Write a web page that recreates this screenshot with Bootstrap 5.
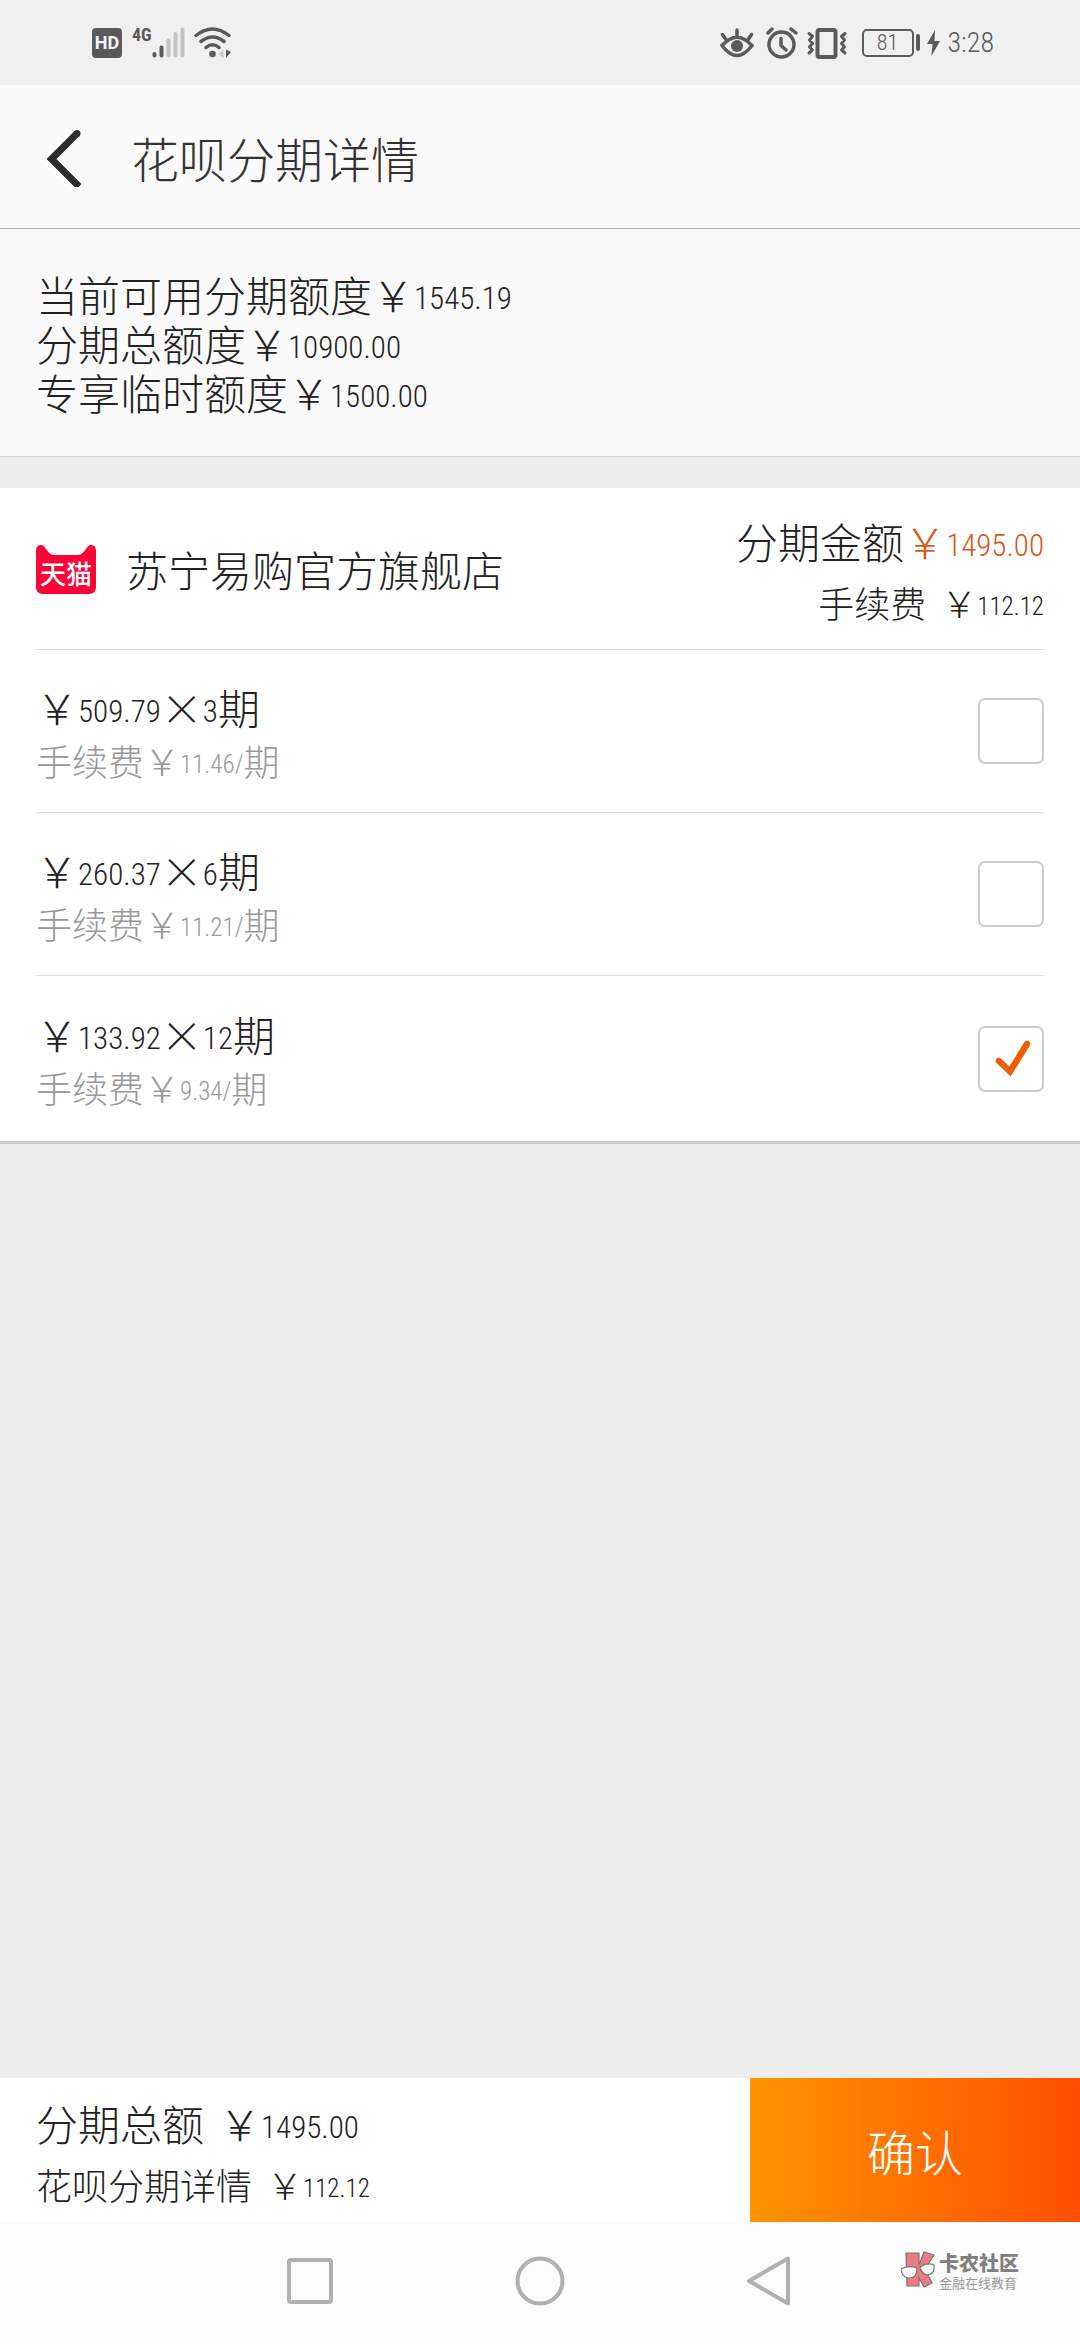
<!DOCTYPE html>
<html lang="zh-CN">
<head>
<meta charset="utf-8">
<meta name="viewport" content="width=device-width, initial-scale=1">
<title>花呗分期详情</title>
<link href="https://cdn.jsdelivr.net/npm/bootstrap@5.3.0/dist/css/bootstrap.min.css" rel="stylesheet">
<style>
  body { background: #ededed; color: #222; font-family: "Noto Sans CJK SC", sans-serif; font-weight: 300; }
  .status-bar { height: 85px; background: #f0f0f0; color: #5a5a5a; padding: 0 86px 0 92px; }
  .status-num { font-family: "Roboto Condensed", Roboto, sans-serif; }
  .net-tag { font-family: "Roboto Condensed", Roboto, sans-serif; font-weight: 700; font-size: 18px; line-height: 18px; height: 34px; margin: 0 0 0 10px; }
  .hd-tag { width: 30px; height: 30px; border-radius: 4px; background: #5a5a5a; color: #f4f4f4; font: 700 18px/30px "Roboto", sans-serif; }
  .battery { width: 52px; height: 28px; border: 2px solid #5a5a5a; border-radius: 5px; font-size: 22px; line-height: 24px; margin-left: 14px; }
  .battery-tip { width: 4px; height: 17px; border-radius: 2px; background: #5a5a5a; margin: 0 7px 0 2px; }
  .clock { font-size: 28px; line-height: 32px; margin-left: 8px; }
  .title-bar { height: 144px; background: #fafafa; border-bottom: 1px solid #b0b0b0; padding: 0 36px; }
  .title-bar h1 { font-size: 48px; line-height: 56px; font-weight: 300; color: #333; margin-left: 47px; }
  .back-btn { width: 48px; height: 60px; }
  .text-main { font-size: 42px; line-height: 49px; }
  .text-sub { font-size: 36px; line-height: 49px; }
  .text-grey { color: #999; }
  .num { font-family: "Roboto Condensed", Roboto, sans-serif; line-height: 1; vertical-align: 3px; }
  .text-main .num { font-size: 31px; }
  .text-sub .num { font-size: 25px; }
  .gap-wide { margin-left: 15px; }
  .quota { background: #fafafa; border-bottom: 1px solid #d6d6d6; padding: 40px 36px; }
  .order { background: #fff; margin-top: 31px; padding: 0 36px; border-bottom: 3px solid #ccc; }
  .order-head { height: 162px; border-bottom: 1px solid #ddd; }
  .order-head .text-end { display: grid; gap: 13px; padding-top: 6px; }
  .shop-name { margin-left: 30px; }
  .amount { color: #d8581c; }
  .plan { height: 163px; border-bottom: 1px solid #ddd; }
  .plan:last-child { border-bottom: 0; height: 165px; }
  .plan label { display: grid; gap: 5px; padding-top: 4px; }
  .plan .form-check-input { width: 66px; height: 66px; margin: 0; border: 2px solid #c8cdd0; border-radius: 7px; background-color: #fff; background-size: 62px 62px; }
  .plan .form-check-input:checked { background-color: #fff; border-color: #c8cdd0;
    background-image: url("data:image/svg+xml,%3Csvg xmlns='http://www.w3.org/2000/svg' viewBox='0 0 62 62'%3E%3Cpath d='M19 33l11 10.500L47 16' fill='none' stroke='%23ee5f05' stroke-width='6.500' stroke-linecap='round'/%3E%3C/svg%3E"); }
  .pay-bar { height: 144px; background: #fff; }
  .pay-bar .totals { padding: 6px 0 0 36px; display: grid; gap: 13px; align-content: center; }
  .confirm-btn { width: 330px; border: 0; border-radius: 0; color: #fff; font-size: 48px; font-weight: 300;
    background: linear-gradient(90deg, #ff9400, #ff7400 45%, #ff4f00); }
  .nav-keys { height: 118px; background: #fcfcfc; gap: 130px; }
  .nav-keys button { width: 100px; height: 64px; }
  .brand-mark { right: 61px; top: 29px; gap: 4px; color: #808080; }
  .brand-name { font-size: 20px; line-height: 24px; font-weight: 900; }
  .brand-sub { font-size: 13px; line-height: 16px; font-weight: 400; color: #999; }
</style>
</head>
<body>
<div class="d-flex flex-column min-vh-100">
  <div class="status-bar d-flex align-items-center justify-content-between">
    <div class="d-flex align-items-center">
      <span class="hd-tag text-center">HD</span>
      <span class="net-tag">4G</span>
      <svg width="34" height="32" viewBox="0 0 34 32" fill="none" stroke-width="4" stroke-linecap="round"><path d="M2.500 28.500v-1.500M9.500 28.500v-8" stroke="#5a5a5a"/><path d="M16.500 28.500v-15M23.500 28.500V7M30.500 28.500V2.500" stroke="#c3c3c3"/></svg>
      <svg class="ms-2" width="38" height="32" viewBox="0 0 38 32" fill="none" stroke="#5a5a5a" stroke-width="3.500" stroke-linecap="round"><path d="M2 8.500Q18.500-4.500 35 8.500M7 14.500q11.500-9 23 0M12 20.500q6.500-5.500 13 0"/><circle cx="18.500" cy="27" r="3.300" fill="#5a5a5a" stroke="none"/><path d="M29.500 22.500v8.500l-5-4z" fill="#c3c3c3" stroke="none"/><path d="M32 22.500l5 2.500-5 6z" fill="#5a5a5a" stroke="none"/></svg>
    </div>
    <div class="d-flex align-items-center status-num">
      <svg width="34" height="32" viewBox="0 0 34 32" fill="none" stroke="#5a5a5a" stroke-width="3.500" stroke-linecap="round"><path d="M2 18.500Q17 2 32 18.500Q17 38.500 2 18.500zM2.500 7.500L5.500 12M17 3v5M31.500 7.500L28.500 12"/><circle cx="17" cy="19" r="6" fill="#5a5a5a" stroke="none"/></svg>
      <svg class="ms-2 me-2 ps-1" width="36" height="32" viewBox="0 0 32 32" fill="none" stroke="#5a5a5a" stroke-width="3.500" stroke-linecap="round"><circle cx="15.500" cy="17.500" r="12.500"/><path d="M15 11.500v7l5 4.500M2 6l4-4M25 2l5 4"/></svg>
      <svg width="42" height="32" viewBox="0 0 42 32" fill="none" stroke="#5a5a5a" stroke-width="4" stroke-linejoin="round"><rect x="11.500" y="3" width="18" height="27" rx="2"/><path stroke-width="3" stroke-linecap="round" d="M3 6.500l3.500 3-3 3.500 3 3.500-3 3.500 3 3-3.500 3M39 6.500l-3.500 3 3 3.500-3 3.500 3 3.500-3 3 3.500 3"/></svg>
      <span class="battery text-center">81</span><span class="battery-tip"></span>
      <svg width="13" height="26" viewBox="0 0 13 26" fill="#5a5a5a"><path d="M8 0L0 14h5.500L4.500 26 13 11H7.500z"/></svg>
      <span class="clock">3:28</span>
    </div>
  </div>

  <header class="title-bar d-flex align-items-center">
    <button type="button" class="back-btn btn p-0 border-0" aria-label="返回"><svg class="d-block" width="48" height="60" viewBox="0 0 48 60" fill="none" stroke="#2c2c2c" stroke-width="7"><path d="M41 6.500L15.500 32 43 59.500"/><circle cx="41" cy="6.500" r="3.500" fill="#2c2c2c" stroke="none"/></svg></button>
    <h1 class="mb-0">花呗分期详情</h1>
  </header>

  <section class="quota text-main">
    <div>当前可用分期额度&#xFFE5;<span class="num">1545.19</span></div>
    <div>分期总额度&#xFFE5;<span class="num">10900.00</span></div>
    <div>专享临时额度&#xFFE5;<span class="num">1500.00</span></div>
  </section>

  <main class="order">
    <div class="order-head d-flex align-items-center justify-content-between">
      <div class="d-flex align-items-center">
        <svg width="60" height="50" viewBox="0 0 60 50"><path d="M0 7Q0 0 6 1q2 .5 4 4 4 6 8 6h24q4 0 8-6 2-3.500 4-4 6-1 6 6v36q0 7-7 7H7q-7 0-7-7z" fill="#fa0537"/><text x="30" y="40" text-anchor="middle" font-size="26" font-weight="500" fill="#fff">天猫</text></svg>
        <span class="shop-name text-main">苏宁易购官方旗舰店</span>
      </div>
      <div class="text-end">
        <div class="text-main">分期金额<span class="amount">&#xFFE5;<span class="num">1495.00</span></span></div>
        <div class="text-sub">手续费<span class="gap-wide">&#xFFE5;</span><span class="num">112.12</span></div>
      </div>
    </div>
    <div class="plan d-flex align-items-center justify-content-between">
      <label for="plan3"><span class="text-main">&#xFFE5;<span class="num">509.79</span>×<span class="num">3</span>期</span><span class="text-sub text-grey">手续费&#xFFE5;<span class="num">11.46/</span>期</span></label>
      <input class="form-check-input" type="checkbox" id="plan3">
    </div>
    <div class="plan d-flex align-items-center justify-content-between">
      <label for="plan6"><span class="text-main">&#xFFE5;<span class="num">260.37</span>×<span class="num">6</span>期</span><span class="text-sub text-grey">手续费&#xFFE5;<span class="num">11.21/</span>期</span></label>
      <input class="form-check-input" type="checkbox" id="plan6">
    </div>
    <div class="plan d-flex align-items-center justify-content-between">
      <label for="plan12"><span class="text-main">&#xFFE5;<span class="num">133.92</span>×<span class="num">12</span>期</span><span class="text-sub text-grey">手续费&#xFFE5;<span class="num">9.34/</span>期</span></label>
      <input class="form-check-input" type="checkbox" id="plan12" checked>
    </div>
  </main>

  <footer class="mt-auto">
    <div class="pay-bar d-flex justify-content-between">
      <div class="totals">
        <div class="text-main">分期总额<span class="gap-wide">&#xFFE5;</span><span class="num">1495.00</span></div>
        <div class="text-sub">花呗分期详情<span class="gap-wide">&#xFFE5;</span><span class="num">112.12</span></div>
      </div>
      <button type="button" class="confirm-btn btn">确认</button>
    </div>
    <nav class="nav-keys position-relative d-flex align-items-center justify-content-center">
      <button type="button" class="btn p-0 border-0" aria-label="最近任务"><svg width="50" height="50" viewBox="0 0 50 50" fill="none" stroke="#b0b0b0" stroke-width="4"><rect x="4" y="4" width="42" height="42" rx="2"/></svg></button>
      <button type="button" class="btn p-0 border-0" aria-label="主屏幕"><svg width="50" height="50" viewBox="0 0 50 50" fill="none" stroke="#b0b0b0" stroke-width="4"><circle cx="25" cy="25" r="22.500"/></svg></button>
      <button type="button" class="btn p-0 border-0" aria-label="返回"><svg width="50" height="50" viewBox="0 0 50 50" fill="none" stroke="#b0b0b0" stroke-width="4" stroke-linejoin="round"><path d="M4 25L43 2.500v45z"/></svg></button>
      <div class="brand-mark position-absolute d-flex">
        <svg width="34" height="38" viewBox="0 0 34 38" stroke="#777" stroke-width="1.200"><path d="M5 2h13v12L23 1l10 3-9 14 7 14-8 4-5-9v8H6z" fill="#ee7b82"/><path d="M0 18q8-4 16-1 0 10-7 10-8 0-9-9zM19 16q7-5 14-2 1 9-6 10-6 0-8-8z" fill="#fff"/></svg>
        <div><div class="brand-name">卡农社区</div><div class="brand-sub">金融在线教育</div></div>
      </div>
    </nav>
  </footer>
</div>
<script src="https://cdn.jsdelivr.net/npm/bootstrap@5.3.0/dist/js/bootstrap.bundle.min.js"></script>
</body>
</html>
